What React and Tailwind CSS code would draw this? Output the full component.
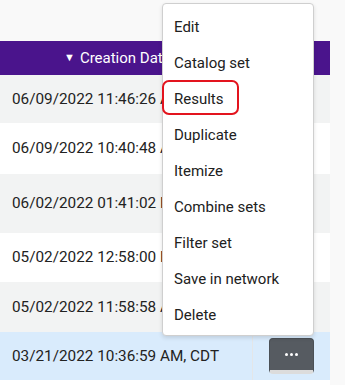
import React from "react";

const rows = [
  { date: "06/09/2022 11:46:26 AM, CDT", h: "h-[48px]", bg: "bg-[#f2f3f3]" },
  { date: "06/09/2022 10:40:48 AM, CDT", h: "h-[51px]", bg: "bg-white" },
  { date: "06/02/2022 01:41:02 PM, CDT", h: "h-[59px]", bg: "bg-[#f2f3f3]" },
  { date: "05/02/2022 12:58:00 PM, CDT", h: "h-[49px]", bg: "bg-white" },
  { date: "05/02/2022 11:58:58 AM, CDT", h: "h-[50px]", bg: "bg-[#f2f3f3]" },
  { date: "03/21/2022 10:36:59 AM, CDT", h: "h-[48px]", bg: "bg-[#d9ebfc]" },
];

const items = [
  "Edit",
  "Catalog set",
  "Results",
  "Duplicate",
  "Itemize",
  "Combine sets",
  "Filter set",
  "Save in network",
  "Delete",
];

function DotsButton() {
  return (
    <div className="w-[45px] h-[36px] rounded-[4px] bg-[#565b61] border border-[#4b5056] border-b-[4px] border-b-[#dcdcdc] flex items-center justify-center">
      <div className="flex gap-[2px]">
        <span className="w-[3px] h-[3px] rounded-full bg-white"></span>
        <span className="w-[3px] h-[3px] rounded-full bg-white"></span>
        <span className="w-[3px] h-[3px] rounded-full bg-white"></span>
      </div>
    </div>
  );
}

export default function App() {
  return (
    <div
      className="relative w-[345px] h-[385px] overflow-hidden bg-[#f9f9f9] text-[#222]"
      style={{ fontFamily: "Roboto, 'Liberation Sans', sans-serif" }}
    >
      <div className="h-[41px]"></div>
      <div className="w-[330px]">
        <div className="h-[34px] bg-[#4a148c] flex items-center text-white text-[15px] pl-[64px]">
          <span className="text-[11px] mr-[5px]">▼</span>
          <span>Creation Date</span>
        </div>
        {rows.map((r, i) => (
          <div key={i} className={`flex ${r.h} ${r.bg}`}>
            <div className="w-[253px] flex items-center pl-[12px] text-[15.3px] whitespace-nowrap border-r border-[#e4e6e8]">
              {r.date}
            </div>
            <div className="flex-1 flex items-center justify-center">
              <DotsButton />
            </div>
          </div>
        ))}
        <div className="h-[10px] bg-white"></div>
      </div>

      <div className="absolute left-[162px] top-[3px] w-[152px] h-[333px] bg-white border border-[#cfcfcf] rounded-[4px] shadow-[0_2px_4px_rgba(0,0,0,0.12)] pt-[5px]">
        {items.map((it) => (
          <div key={it} className="h-[36px] flex items-center pl-[11px] text-[15px] text-[#212121] whitespace-nowrap">
            {it}
          </div>
        ))}
      </div>
      <div className="absolute left-[162px] top-[80px] w-[77px] h-[35px] border-2 border-[#e3141e] rounded-[7px]"></div>
    </div>
  );
}
